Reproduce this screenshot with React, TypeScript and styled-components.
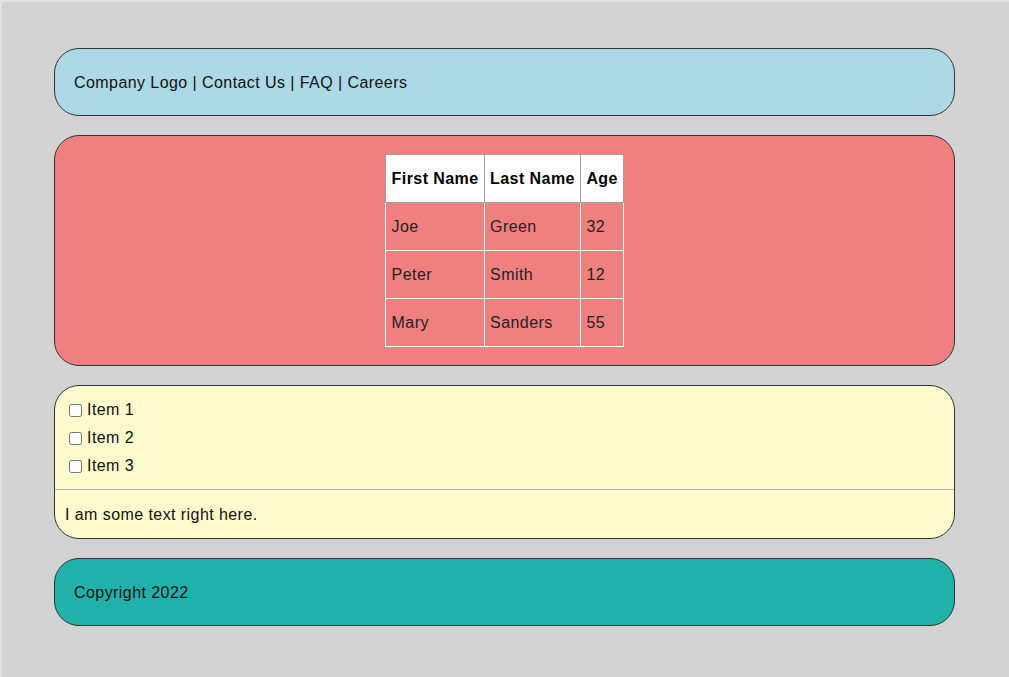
import styled, { createGlobalStyle } from 'styled-components';

const GlobalStyle = createGlobalStyle`
  html, body {
    margin: 0;
    padding: 0;
  }

  body {
    font-family: "Liberation Sans", Arial, sans-serif;
    font-size: 16px;
    letter-spacing: 0.43px;
    color: #111;
    background-color: lightgray;
  }
`;

const Page = styled.div`
  min-height: 677px;
  box-sizing: border-box;
  background-color: lightgray;
  border-top: 2px solid #e2e2e2;
  border-left: 2px solid #e2e2e2;
  padding: 46px 54px 40px 52px;
  display: flex;
  flex-direction: column;
  gap: 19px;
`;

const Panel = styled.section<{ $bg: string }>`
  background-color: ${({ $bg }) => $bg};
  border: 1px solid #333;
  border-radius: 25px;
  overflow: hidden;
`;

const Bar = styled(Panel)`
  padding: 25px 19px 23px;
  line-height: 18px;
`;

const TablePanel = styled(Panel)`
  padding: 18px 19px;
  display: flex;
  justify-content: center;
`;

const PeopleTable = styled.table`
  border-collapse: collapse;
  font-size: 16px;
  line-height: 18px;

  th, td {
    padding: 14.5px 5px 14.5px 5.5px;
    text-align: left;
  }

  th {
    background-color: #fff;
    border: 1px solid #a0a0a0;
    font-weight: bold;
    color: #000;
  }

  td {
    border: 1px solid #fff;
    color: #222;
  }
`;

const CheckList = styled.div`
  padding: 10px 10px 9px;
  display: flex;
  flex-direction: column;
  border-bottom: 1px solid #b8b8b8;
`;

const CheckItem = styled.label`
  height: 28px;
  display: flex;
  align-items: center;

  input {
    margin: 0 5px 0 4px;
    width: 13px;
    height: 13px;
  }
`;

const Note = styled.p`
  margin: 0;
  padding: 16px 10px 14px;
  line-height: 18px;
`;

const people = [
  { first: 'Joe', last: 'Green', age: 32 },
  { first: 'Peter', last: 'Smith', age: 12 },
  { first: 'Mary', last: 'Sanders', age: 55 },
];

const items = ['Item 1', 'Item 2', 'Item 3'];

const App = () => {
  return (
    <>
      <GlobalStyle />
      <Page>
        <Bar $bg="lightblue">Company Logo | Contact Us | FAQ | Careers</Bar>

        <TablePanel $bg="lightcoral">
          <PeopleTable>
            <thead>
              <tr>
                <th>First Name</th>
                <th>Last Name</th>
                <th>Age</th>
              </tr>
            </thead>
            <tbody>
              {people.map((p) => (
                <tr key={p.first}>
                  <td>{p.first}</td>
                  <td>{p.last}</td>
                  <td>{p.age}</td>
                </tr>
              ))}
            </tbody>
          </PeopleTable>
        </TablePanel>

        <Panel $bg="lemonchiffon">
          <CheckList>
            {items.map((item) => (
              <CheckItem key={item}>
                <input type="checkbox" />
                {item}
              </CheckItem>
            ))}
          </CheckList>
          <Note>I am some text right here.</Note>
        </Panel>

        <Bar $bg="lightseagreen">Copyright 2022</Bar>
      </Page>
    </>
  );
};

export default App;
